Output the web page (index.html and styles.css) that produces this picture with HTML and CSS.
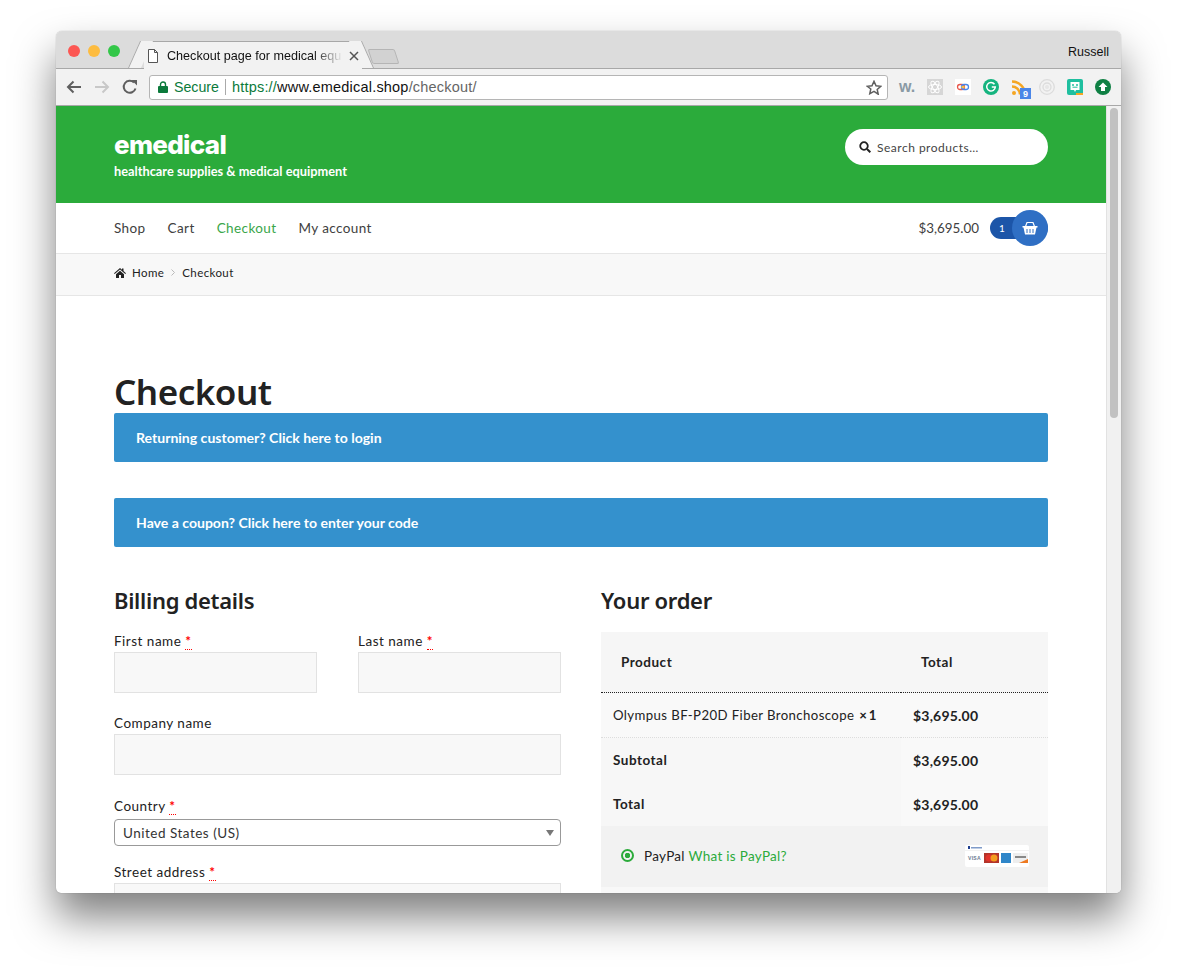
FILE: index.html
```html
<!DOCTYPE html>
<html lang="en">
<head>
    <meta charset="UTF-8">
    <meta name="viewport" content="width=device-width, initial-scale=1.0">
    <title>Checkout page for medical equipment</title>
    <link rel="stylesheet" href="styles.css">
</head>
<body>
    <div class="window">
        <div class="titlebar">
            <div class="lights">
                <span class="light red"></span>
                <span class="light yellow"></span>
                <span class="light green"></span>
            </div>
            <div class="tab">
                <svg class="tab-doc" width="12" height="14" viewBox="0 0 12 14"><path d="M1.5.5h6l3 3v10h-9z M7.5.5v3h3" fill="#fff" stroke="#555"/></svg>
                <span class="tab-title">Checkout page for medical equ</span>
                <svg class="tab-close" width="10" height="10" viewBox="0 0 10 10"><path d="M1 1l8 8M9 1l-8 8" stroke="#555" stroke-width="1.5"/></svg>
            </div>
            <div class="new-tab"></div>
            <div class="profile">Russell</div>
        </div>
        <div class="toolbar">
            <svg class="nav-icon" width="16" height="14" viewBox="0 0 16 14"><path d="M15 7H2M7.500 1.500L2 7l5.500 5.500" fill="none" stroke="#5f5f5f" stroke-width="2"/></svg>
            <svg class="nav-icon" width="16" height="14" viewBox="0 0 16 14"><path d="M1 7h13M8.500 1.500L14 7l-5.500 5.500" fill="none" stroke="#c8c8c8" stroke-width="2"/></svg>
            <svg class="nav-icon" width="16" height="16" viewBox="0 0 16 16"><path d="M13.500 9.500A6 6 0 1 1 12 3.500" fill="none" stroke="#5f5f5f" stroke-width="2"/><path d="M9.500 1H15v5.500z" fill="#5f5f5f"/></svg>
            <div class="omnibox">
                <svg class="lock" width="10" height="12" viewBox="0 0 10 12"><path d="M2.500 5V3.500a2.500 2.500 0 0 1 5 0V5" fill="none" stroke="#0b7a3b" stroke-width="1.400"/><rect y="5" width="10" height="7" rx="1" fill="#0b7a3b"/></svg>
                <span class="secure">Secure</span>
                <span class="url"><span class="url-scheme">https://</span><span class="url-host">www.emedical.shop</span>/checkout/</span>
                <svg class="star" width="16" height="15" viewBox="0 0 16 15"><path d="M8 1.300l2 4.500 4.800.5-3.600 3.200 1 4.700L8 11.300l-4.200 2.400 1-4.700L1.200 6.300 6 5.800z" fill="none" stroke="#5f5f5f" stroke-width="1.500"/></svg>
            </div>
            <div class="extensions">
                <span class="ext ext-w">w.</span>
                <svg class="ext" width="16" height="16" viewBox="0 0 16 16"><rect width="16" height="16" fill="#d6d6d6"/><g fill="none" stroke="#fff"><ellipse cx="8" cy="8" rx="6.500" ry="2.500"/><ellipse cx="8" cy="8" rx="6.500" ry="2.500" transform="rotate(60 8 8)"/><ellipse cx="8" cy="8" rx="6.500" ry="2.500" transform="rotate(120 8 8)"/></g></svg>
                <svg class="ext" width="16" height="16" viewBox="0 0 16 16"><rect width="16" height="16" fill="#fff"/><rect x="2.500" y="5.500" width="7" height="5" rx="2.500" fill="none" stroke="#e8564a" stroke-width="1.300"/><rect x="6.500" y="5.500" width="7" height="5" rx="2.500" fill="none" stroke="#4a86e8" stroke-width="1.300"/><rect x="6.500" y="7" width="3" height="2" fill="#f4c542"/></svg>
                <svg class="ext" width="16" height="16" viewBox="0 0 16 16"><circle cx="8" cy="8" r="8" fill="#15b47f"/><path d="M11.500 5.200A4.300 4.300 0 1 0 12.300 8H8.800" fill="none" stroke="#fff" stroke-width="1.500"/></svg>
                <svg class="ext ext-rss" width="20" height="20" viewBox="0 0 20 20"><g fill="none" stroke="#f5a623" stroke-width="2.500"><path d="M1 2.500a13 13 0 0 1 13 13"/><path d="M1 7.500a8 8 0 0 1 8 8"/></g><circle cx="3" cy="14" r="2" fill="#f5a623"/><rect x="9" y="9" width="11" height="11" fill="#4a86e8"/><text class="ext-count" x="14.500" y="18">9</text></svg>
                <svg class="ext" width="16" height="16" viewBox="0 0 16 16"><g fill="none" stroke="#dcdcdc" stroke-width="1.300"><circle cx="8" cy="8" r="7.300"/><circle cx="8" cy="8" r="4"/></g><circle cx="8" cy="8" r="2" fill="#e6e6e6"/></svg>
                <svg class="ext" width="16" height="16" viewBox="0 0 16 16"><rect width="16" height="16" rx="2" fill="#1fbf9f"/><path d="M3.500 3h9v8H9l-1 2-1-2H3.500z" fill="#fff"/><circle cx="6" cy="6" r="1" fill="#1fbf9f"/><circle cx="10" cy="6" r="1" fill="#1fbf9f"/><path d="M5.500 8.200h5" stroke="#1fbf9f"/><rect x="9" y="14" width="7" height="2" fill="#f5a623"/></svg>
                <svg class="ext" width="16" height="16" viewBox="0 0 16 16"><circle cx="8" cy="8" r="8" fill="#0f8044"/><path d="M8 3.500L12.500 8H10v4H6V8H3.500z" fill="#fff"/></svg>
            </div>
        </div>
        <div class="viewport">
            <div class="page">
                <header class="site-header">
                    <div>
                        <div class="logo">emedical</div>
                        <div class="tagline">healthcare supplies &amp; medical equipment</div>
                    </div>
                    <div class="search">
                        <svg width="12" height="12" viewBox="0 0 12 12"><circle cx="5" cy="5" r="3.800" fill="none" stroke="#222" stroke-width="1.800"/><path d="M8 8l3.300 3.300" stroke="#222" stroke-width="2"/></svg>
                        <span>Search products…</span>
                    </div>
                </header>
                <nav class="site-nav">
                    <a class="nav-link">Shop</a>
                    <a class="nav-link">Cart</a>
                    <a class="nav-link current">Checkout</a>
                    <a class="nav-link">My account</a>
                    <span class="cart-amount">$3,695.00</span>
                    <span class="cart">
                        <span class="cart-count">1</span>
                        <span class="cart-icon">
                            <svg width="16" height="14" viewBox="0 0 16 14"><path d="M3.500 5.500L5 1.500h6l1.500 4" fill="none" stroke="#fff" stroke-width="1.200"/><path d="M.5 5h15v1.500h-1L13 13.500H3L1.500 6.500h-1z" fill="#fff"/><path d="M5 8v4M8 8v4M11 8v4" stroke="#2f6fc4"/></svg>
                        </span>
                    </span>
                </nav>
                <div class="breadcrumb">
                    <svg width="12" height="10" viewBox="0 0 12 10"><path d="M6 0L0 5.200l.7.800L6 1.500 11.300 6l.7-.8L9.500 3V.5H8V1.700zM2 6.200V10h3V7h2v3h3V6.200L6 2.800z" fill="#222"/></svg>
                    <span>Home</span>
                    <svg class="crumb-sep" width="4" height="7" viewBox="0 0 4 7"><path d="M.5.500l3 3-3 3" fill="none" stroke="#bbb"/></svg>
                    <span>Checkout</span>
                </div>
                <main class="content">
                    <h1 class="page-title">Checkout</h1>
                    <div class="notice">Returning customer? Click here to login</div>
                    <div class="notice">Have a coupon? Click here to enter your code</div>
                    <div class="columns">
                        <section>
                            <h3 class="section-title">Billing details</h3>
                            <div class="name-row">
                                <div class="field">
                                    <label class="field-label">First name <span class="req">*</span></label>
                                    <div class="input"></div>
                                </div>
                                <div class="field">
                                    <label class="field-label">Last name <span class="req">*</span></label>
                                    <div class="input"></div>
                                </div>
                            </div>
                            <div class="field">
                                <label class="field-label">Company name</label>
                                <div class="input"></div>
                            </div>
                            <div class="field field-country">
                                <label class="field-label">Country <span class="req">*</span></label>
                                <div class="select">United States (US)<span class="select-arrow"></span></div>
                            </div>
                            <div class="field">
                                <label class="field-label">Street address <span class="req">*</span></label>
                                <div class="input"></div>
                            </div>
                        </section>
                        <section>
                            <h3 class="section-title">Your order</h3>
                            <table class="order">
                                <thead>
                                    <tr><th class="col-name">Product</th><th>Total</th></tr>
                                </thead>
                                <tbody>
                                    <tr class="item"><td class="col-name">Olympus BF-P20D Fiber Bronchoscope <strong class="qty">× 1</strong></td><td class="money">$3,695.00</td></tr>
                                    <tr class="sum"><td class="col-name">Subtotal</td><td class="money">$3,695.00</td></tr>
                                    <tr class="sum"><td class="col-name">Total</td><td class="money">$3,695.00</td></tr>
                                </tbody>
                            </table>
                            <div class="payment">
                                <span class="radio"></span>
                                <span>PayPal <a class="link">What is PayPal?</a></span>
                                <svg class="cards" width="64" height="22" viewBox="0 0 64 22"><rect width="64" height="22" rx="2" fill="#fff"/><rect y="5" width="64" height="1" fill="#f2f2f2"/><path d="M3 1h2v3H3z" fill="#1f3f8f"/><rect x="6" y="2" width="11" height="1.500" fill="#7f9bc9"/><text class="cards-visa" x="3" y="15">VISA</text><rect x="19" y="8" width="15" height="10" fill="#b3342a"/><circle cx="24" cy="13" r="3.500" fill="#e2332c"/><circle cx="29" cy="13" r="3.500" fill="#f39c1f"/><rect x="36" y="8" width="10" height="10" fill="#2f86c9"/><rect x="48" y="8" width="15" height="10" fill="#eee"/><rect x="50" y="11" width="11" height="2" fill="#888"/><path d="M54 18l9-4v4z" fill="#ee7a22"/></svg>
                            </div>
                            <div class="payment-foot"></div>
                        </section>
                    </div>
                </main>
            </div>
            <div class="scrollbar"><div class="scroll-thumb"></div></div>
        </div>
    </div>
</body>
</html>
```

FILE: styles.css
```css
html, body {
    margin: 0;
    height: 100%;
    background: #fff;
}
body {
    padding: 31px 56px 0;
    box-sizing: border-box;
    height: 974px;
    overflow: hidden;
    font-family: "Lato", sans-serif;
    color: #222;
}
.window {
    height: 862px;
    border-radius: 6px 6px 5px 5px;
    overflow: hidden;
    box-shadow: 0 24px 42px rgba(0,0,0,0.5), 0 0 1px rgba(0,0,0,0.4);
    display: flex;
    flex-direction: column;
    background: #fff;
}

/* browser chrome */
.titlebar {
    height: 38px;
    box-sizing: border-box;
    flex: none;
    display: flex;
    align-items: flex-end;
    background: #dcdcdc;
    border-bottom: 1px solid #a8a8a8;
    font-family: "Liberation Sans", sans-serif;
}
.lights {
    display: flex;
    gap: 8px;
    padding: 0 0 11px 12px;
    width: 76px;
}
.light {
    width: 12px;
    height: 12px;
    border-radius: 50%;
}
.red { background: #fc5753; }
.yellow { background: #fdbc40; }
.green { background: #33c748; }
.tab {
    width: 218px;
    height: 28px;
    margin-bottom: -1px;
    box-sizing: border-box;
    padding: 0 8px 0 3px;
    display: flex;
    align-items: center;
    gap: 8px;
    background: #f2f2f2;
    border-top: 1px solid #a8a8a8;
    font-size: 12.6px;
    color: #111;
    position: relative;
}
.tab::before, .tab::after {
    content: "";
    position: absolute;
    top: -1px;
    bottom: 1px;
    width: 12px;
    background: #f2f2f2;
}
.tab::before {
    left: -10px;
    border-left: 1px solid #a8a8a8;
    transform: skewX(-24deg);
}
.tab::after {
    right: -6px;
    border-right: 1px solid #a8a8a8;
    transform: skewX(24deg);
}
.tab > * { position: relative; z-index: 1; }
.tab-doc { flex: none; }
.tab-title {
    flex: 1;
    white-space: nowrap;
    -webkit-mask-image: linear-gradient(90deg, #000 146px, transparent 176px);
    mask-image: linear-gradient(90deg, #000 146px, transparent 176px);
}
.tab-close { flex: none; }
.new-tab {
    width: 27px;
    height: 15px;
    margin: 0 0 4px 8px;
    background: #d2d2d2;
    border: 1px solid #b5b5b5;
    border-radius: 2px;
    transform: skewX(18deg);
    box-sizing: border-box;
}
.profile {
    margin-left: auto;
    padding: 0 12px 9px 0;
    font-size: 12.5px;
    color: #111;
}
.toolbar {
    height: 37px;
    flex: none;
    box-sizing: border-box;
    display: flex;
    align-items: center;
    padding-left: 10px;
    background: #f2f2f2;
    border-bottom: 1px solid #a8a8a8;
    font-family: "Liberation Sans", sans-serif;
}
.nav-icon { margin-right: 12px; flex: none; }
.omnibox {
    width: 739px;
    height: 25px;
    margin-left: -1px;
    box-sizing: border-box;
    flex: none;
    display: flex;
    align-items: center;
    padding: 0 5px 0 8px;
    background: #fff;
    border: 1px solid #b5b5b5;
    border-radius: 3px;
    font-size: 14.5px;
    color: #666;
}
.lock { margin-right: 6px; }
.secure {
    color: #0b7a3b;
    font-size: 14.2px;
    padding-right: 6px;
    margin-right: 6px;
    border-right: 1px solid #aaa;
}
.url { letter-spacing: 0.2px; }
.url-scheme { color: #0b7a3b; }
.url-host { color: #111; }
.star { margin-left: auto; }
.extensions {
    flex: 1;
    display: flex;
    align-items: center;
    gap: 12px;
    padding-left: 11px;
}
.ext { flex: none; }
.ext-w {
    width: 16px;
    font: bold 16px "Liberation Sans", sans-serif;
    color: #8a9aa5;
    line-height: 16px;
}
.ext-rss {
    margin: 3px -4px 0 0;
}
.ext-count {
    font: bold 9px "Liberation Sans", sans-serif;
    fill: #fff;
    text-anchor: middle;
}

/* page */
.viewport {
    flex: 1;
    display: flex;
    min-height: 0;
}
.page {
    flex: 1;
    min-width: 0;
    overflow: hidden;
}
.scrollbar {
    width: 15px;
    flex: none;
    background: #f1f1f1;
    border-left: 1px solid #e2e2e2;
    box-sizing: border-box;
    padding: 2px 3px;
}
.scroll-thumb {
    height: 310px;
    border-radius: 4px;
    background: #c1c1c1;
}
.site-header {
    height: 97px;
    box-sizing: border-box;
    padding: 25px 58px 0 58px;
    display: flex;
    justify-content: space-between;
    align-items: flex-start;
    background: #2bab3b;
    color: #fff;
}
.logo {
    font-family: "Inter", sans-serif;
    font-weight: 800;
    font-size: 26px;
    line-height: 28px;
    letter-spacing: -0.7px;
}
.tagline {
    margin-top: 4px;
    font-weight: 700;
    font-size: 12.8px;
    line-height: 16px;
}
.search {
    width: 203px;
    height: 36px;
    margin-top: -2px;
    box-sizing: border-box;
    display: flex;
    align-items: center;
    gap: 6px;
    padding-left: 14px;
    background: #fff;
    border-radius: 18px;
    color: #444;
    font-size: 12px;
    letter-spacing: 0.5px;
}
.site-nav {
    height: 51px;
    box-sizing: border-box;
    padding: 0 58px;
    display: flex;
    align-items: center;
    font-size: 13.500px;
    letter-spacing: 0.4px;
    color: #404040;
    border-bottom: 1px solid #e6e6e6;
}
.nav-link { margin-right: 22px; }
.current { color: #3aa64a; }
.cart-amount {
    margin-left: auto;
    margin-right: 11px;
    letter-spacing: 0;
    font-size: 13.400px;
}
.cart {
    display: flex;
    align-items: center;
    position: relative;
    width: 58px;
    height: 22px;
    background: #1c55a8;
    border-radius: 11px;
    color: #fff;
    font-size: 10px;
    letter-spacing: 0;
}
.cart-count { padding-left: 9px; }
.cart-icon {
    position: absolute;
    right: 0;
    top: -7px;
    width: 36px;
    height: 36px;
    border-radius: 50%;
    background: #2f6fc4;
    display: flex;
    align-items: center;
    justify-content: center;
}
.breadcrumb {
    height: 42px;
    box-sizing: border-box;
    padding: 0 58px 4px;
    display: flex;
    align-items: center;
    gap: 6px;
    background: #f8f8f8;
    border-bottom: 1px solid #e6e6e6;
    font-size: 11.500px;
    letter-spacing: 0.4px;
}
.crumb-sep { margin: 0 1px; }
.content { padding: 0 58px; }
.page-title {
    margin: 75px 0 1px;
    font-family: "Noto Sans", sans-serif;
    font-size: 35px;
    font-weight: 600;
    line-height: 41px;
    letter-spacing: -0.5px;
    color: #222;
}
.notice {
    height: 49px;
    margin-bottom: 36px;
    padding-left: 22px;
    display: flex;
    align-items: center;
    background: #3491cd;
    border-radius: 2px;
    color: #fff;
    font-weight: 700;
    font-size: 14.050px;
}
.columns {
    display: grid;
    grid-template-columns: 447px 447px;
    gap: 40px;
}
.section-title {
    margin: 1px 0 16px;
    font-family: "Noto Sans", sans-serif;
    font-size: 22px;
    font-weight: 600;
    line-height: 32px;
    letter-spacing: -0.3px;
    color: #222;
}
.name-row {
    display: grid;
    grid-template-columns: 203px 203px;
    gap: 41px;
}
.field { margin-bottom: 21px; }
.field-country { margin-bottom: 17px; }
.field-country .field-label { padding-top: 1px; }
.field-label {
    display: block;
    height: 20px;
    font-size: 13.500px;
    line-height: 18px;
    letter-spacing: 0.5px;
}
.req {
    color: #f00;
    font-weight: 700;
    border-bottom: 1px dotted #f00;
}
.input {
    height: 41px;
    box-sizing: border-box;
    background: #f8f8f8;
    border: 1px solid #e2e2e2;
}
.select {
    height: 27px;
    margin-top: 2px;
    box-sizing: border-box;
    padding: 0 8px;
    display: flex;
    align-items: center;
    position: relative;
    background: #fff;
    border: 1px solid #999;
    border-radius: 4px;
    font-size: 13.500px;
    letter-spacing: 0.5px;
    color: #333;
}
.select-arrow {
    position: absolute;
    right: 6px;
    top: 10px;
    border-left: 4px solid transparent;
    border-right: 4px solid transparent;
    border-top: 6px solid #777;
}
.order {
    width: 100%;
    border-collapse: collapse;
    table-layout: fixed;
    font-size: 13.500px;
    letter-spacing: 0.5px;
}
.order th {
    height: 60px;
    padding: 0 0 0 20px;
    text-align: left;
    background: #f6f6f6;
    border-bottom: 1px dotted #222;
}
.order td {
    padding: 0 0 0 12px;
    background: #f9f9f9;
}
.col-name {
    width: 300px;
    box-sizing: border-box;
}
.order td.col-name { background: #f7f7f7; }
.item td {
    height: 44px;
    border-bottom: 1px dotted #ddd;
}
.order .item td.col-name {
    background: #f9f9f9;
    font-size: 13.200px;
    letter-spacing: 0.4px;
}
.sum td { height: 44px; }
.sum .col-name { font-weight: 700; }
.money {
    font-weight: 700;
    font-size: 14px;
    letter-spacing: 0.2px;
}
.qty {
    margin-left: 1px;
    word-spacing: -2px;
}
.payment {
    height: 61px;
    box-sizing: border-box;
    padding: 0 19px 2px 20px;
    display: flex;
    align-items: center;
    gap: 10px;
    background: #f2f2f2;
    font-size: 13.500px;
    letter-spacing: 0.3px;
}
.payment-foot {
    height: 30px;
    background: #f8f8f8;
}
.radio {
    width: 13px;
    height: 13px;
    box-sizing: border-box;
    flex: none;
    border-radius: 50%;
    border: 2px solid #2bab3b;
    background: radial-gradient(circle, #2bab3b 0 2.500px, transparent 3px);
}
.link { color: #2bab3b; }
.cards { margin-left: auto; }
.cards-visa {
    font: bold 5px "Liberation Sans", sans-serif;
    fill: #6a7a90;
}
```
